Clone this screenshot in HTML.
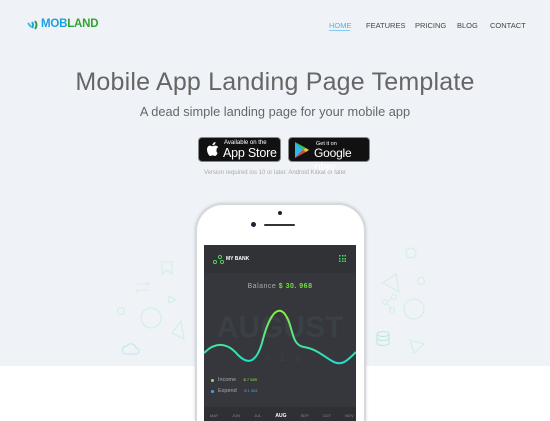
<!DOCTYPE html>
<html style="overflow:hidden;width:550px;height:421px"><head><meta charset="utf-8"><style>
*{margin:0;padding:0;box-sizing:border-box}
body{width:550px;height:421px;overflow:hidden;font-family:"Liberation Sans",sans-serif;background:#fff;position:relative}
.hero{position:absolute;left:0;top:0;width:550px;height:366px;background:#eff3f7}
.a{position:absolute}
.nav{font-size:7.5px;color:#444;top:21px}
h1{position:absolute;left:0;width:550px;text-align:center;top:68px;font-weight:normal;font-size:25px;color:#666;letter-spacing:0.2px}
.sub{position:absolute;left:0;width:550px;text-align:center;top:104px;font-size:12.8px;color:#666}
.btn{position:absolute;top:137px;height:25px;background:#111;border:1px solid #888;border-radius:4px;color:#fff}
</style></head><body>
<div class="hero"></div>
<svg class="a" style="left:27px;top:19px" width="12" height="12" viewBox="0 0 12 12"><path d="M1 4 L4 8" stroke="#4db6e8" stroke-width="2"/><path d="M5 3 Q7 6 5 9" stroke="#1fa3e0" stroke-width="2" fill="none"/><path d="M8 2 Q11 6 8 10" stroke="#2aa148" stroke-width="2" fill="none"/></svg>
<div class="a" style="left:41px;top:18px;font-size:11.5px;font-weight:bold;letter-spacing:-0.2px"><span style="color:#1a9fe0">MOB</span><span style="color:#2ea52e">LAND</span></div>
<div class="a nav" style="left:329px;color:#4ab6e9">HOME</div>
<div class="a" style="left:329px;top:30px;width:21px;height:1px;background:#7fccf0"></div>
<div class="a nav" style="left:366px">FEATURES</div>
<div class="a nav" style="left:415px">PRICING</div>
<div class="a nav" style="left:457px">BLOG</div>
<div class="a nav" style="left:490px">CONTACT</div>
<h1>Mobile App Landing Page Template</h1>
<div class="sub">A dead simple landing page for your mobile app</div>
<div class="btn" style="left:198px;width:83px">
<svg class="a" style="left:7px;top:4px" width="13" height="15" viewBox="0 0 13 15"><path d="M10.5 8c0-2 1.6-2.8 1.7-2.9-1-1.4-2.4-1.5-2.9-1.5-1.2-.1-2.3.7-2.9.7-.6 0-1.5-.7-2.5-.7C2.6 3.6 1 4.9 1 7.5c0 2.6 1.8 6.5 3.4 6.5.8 0 1.2-.6 2.3-.6s1.3.6 2.3.6c1.3 0 2.3-2.2 2.6-3.1-1.2-.5-1.1-1.6-1.1-2.9zM8.7 2.3C9.2 1.7 9.6.9 9.5 0c-.8 0-1.7.5-2.2 1.1-.5.5-.9 1.4-.8 2.2.9.1 1.7-.4 2.2-1z" fill="#fff"/></svg>
<div class="a" style="left:25px;top:2px;font-size:6px">Available on the</div>
<div class="a" style="left:24px;top:8px;font-size:12.5px;letter-spacing:-0.2px">App Store</div></div>
<div class="btn" style="left:288px;width:82px">
<svg class="a" style="left:5px;top:4px" width="15" height="16" viewBox="0 0 15 16"><path d="M1 0 L9 8 L1 16Z" fill="#2fb8e9"/><path d="M1 0 L12 6 L9 8Z" fill="#3bc45b"/><path d="M1 16 L12 10 L9 8Z" fill="#e8423a"/><path d="M12 6 L15 8 L12 10 L9 8Z" fill="#f8c223"/></svg>
<div class="a" style="left:27px;top:3px;font-size:5.5px">Get it on</div>
<div class="a" style="left:25px;top:8px;font-size:12px;letter-spacing:-0.2px">Google play</div></div>
<div class="a" style="left:0;width:550px;text-align:center;top:170px;font-size:6px;color:#aaa">Version required ios 10 or later. Android Kitkat or later</div>
<svg class="a" style="left:100px;top:240px" width="360" height="125" viewBox="100 240 360 125" fill="none" stroke="#d3efe2" stroke-width="1.1">
<path d="M162 262h10v12l-5-4-5 4z"/><path d="M136 284h13l-2-2M149 290h-13l2 2"/><path d="M168 296l8 4-7 3z"/><circle cx="121" cy="311" r="3.5"/><circle cx="151" cy="318" r="10"/><path d="M172 333l9-12 3 18z"/><path d="M123 352a4 4 0 0 1 4-6 5 5 0 0 1 9 2 3 3 0 0 1 0 6h-11a3 3 0 0 1-2-2z" stroke="#bde8e6"/>
<circle cx="411" cy="253" r="5"/><path d="M383 283l13-9 3 18z"/><circle cx="421" cy="281" r="3.5"/><circle cx="414" cy="309" r="10"/><circle cx="385" cy="302" r="2.5"/><circle cx="394" cy="297" r="2.5"/><circle cx="392" cy="310" r="2.5"/><path d="M387 302l5-4M387 303l4 6"/><ellipse cx="383" cy="334" rx="6" ry="2.5" stroke="#bde8dc"/><path d="M377 334v9a6 2.5 0 0 0 12 0v-9M377 338a6 2.5 0 0 0 12 0" stroke="#bde8dc"/><path d="M410 340l14 4-10 9z"/>
</svg>
<div class="a" style="left:195px;top:203px;width:171px;height:218px;border:2px solid #d6d9dc;border-bottom:none;border-radius:28px 28px 0 0;background:#fff;box-shadow:0 0 3px rgba(0,0,0,.15)"></div>
<div class="a" style="left:278px;top:211px;width:4px;height:4px;border-radius:50%;background:#222"></div>
<div class="a" style="left:251px;top:222px;width:5px;height:5px;border-radius:50%;background:#223"></div>
<div class="a" style="left:264px;top:224px;width:31px;height:2px;border-radius:1px;background:#333"></div>
<div class="a" style="left:204px;top:245px;width:152px;height:176px;background:#35373c;overflow:hidden">
<div class="a" style="left:0;top:0;width:152px;height:28px;background:#303236"></div>
<svg class="a" style="left:9px;top:10px" width="12" height="9"><circle cx="7" cy="2" r="1.6" fill="none" stroke="#5c6" /><circle cx="2" cy="7" r="1.6" fill="none" stroke="#5c6"/><circle cx="9" cy="7" r="1.6" fill="none" stroke="#5c6"/></svg>
<div class="a" style="left:22px;top:11px;font-size:5px;color:#fff;font-weight:bold">MY BANK</div>
<div class="a" style="left:135px;top:10px;width:7px;height:7px;background:repeating-linear-gradient(90deg,#4d6 0 1.5px,transparent 1.5px 2.8px);-webkit-mask:repeating-linear-gradient(#000 0 1.5px,transparent 1.5px 2.8px)"></div>
<div class="a" style="left:0;width:152px;text-align:center;top:38px;font-size:7px;color:#aaa;letter-spacing:.5px">Balance <span style="color:#7d4;font-weight:bold">$ 30. 968</span></div>
<div class="a" style="left:0;width:152px;text-align:center;top:66px;font-size:30px;color:#3b4044;font-weight:bold">AUGUST</div>
<div class="a" style="left:0;width:152px;text-align:center;top:108px;font-size:9px;color:#3c4145;letter-spacing:10px">2016</div>
<svg class="a" style="left:0;top:60px" width="152" height="80"><defs><linearGradient id="g" x1="0" x2="0" y1="0" y2="1"><stop offset="0" stop-color="#8e4"/><stop offset="1" stop-color="#2dc"/></linearGradient></defs><path d="M0 48 C12 36 24 38 34 50 C44 60 52 58 58 38 C64 14 72 0 80 8 C90 20 86 40 100 42 C112 44 118 50 128 56 C138 62 144 55 152 47" fill="none" stroke="url(#g)" stroke-width="2"/></svg>
<div class="a" style="left:7px;top:134px;width:3px;height:3px;border-radius:50%;background:#8e4"></div>
<div class="a" style="left:14px;top:132px;font-size:5.5px;color:#aaa">Income <span style="color:#8e4;font-size:4px;margin-left:6px">$ 7 589</span></div>
<div class="a" style="left:7px;top:145px;width:3px;height:3px;border-radius:50%;background:#4ad"></div>
<div class="a" style="left:14px;top:143px;font-size:5.5px;color:#aaa">Expend <span style="color:#4ad;font-size:4px;margin-left:6px">$ 1 353</span></div>
<div class="a" style="left:0;top:162px;width:152px;height:14px;background:#2e3034"></div>
<div class="a" style="left:6px;top:168px;font-size:4px;color:#888;word-spacing:13px">MAY JUN JUL <b style="color:#fff;font-size:5px">AUG</b> SEP OCT NOV</div>
</div>
</body></html>
